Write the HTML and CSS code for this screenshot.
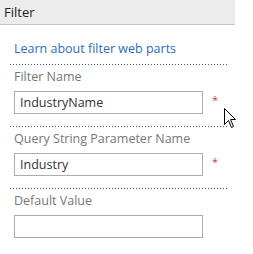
FILE: index.html
```html
<!DOCTYPE html>
<html>
<head>
<meta charset="utf-8">
<link rel="stylesheet" href="styles.css">
</head>
<body>
<div class="header">Filter</div>
<div class="content">
  <div class="link-row"><a class="link" href="#">Learn about filter web parts</a></div>
  <div class="section">
    <div class="label">Filter Name</div>
    <div class="field-row">
      <div class="input">IndustryName</div>
      <span class="req">*</span>
    </div>
  </div>
  <div class="section">
    <div class="label">Query String Parameter Name</div>
    <div class="field-row">
      <div class="input">Industry</div>
      <span class="req">*</span>
    </div>
  </div>
  <div class="section">
    <div class="label">Default Value</div>
    <div class="field-row">
      <div class="input"></div>
    </div>
  </div>
</div>
<svg class="cursor" width="13" height="21" viewBox="0 0 13 21">
  <path d="M0.5 0.5 L0.5 16.5 L4.5 12.5 L7.5 19.5 L9.5 18.5 L6.5 11.5 L11.5 11.5 Z" fill="#fff" stroke="#000" stroke-width="1"/>
</svg>
</body>
</html>
```
FILE: styles.css
```css
html, body {
  margin: 0;
  padding: 0;
  background: #fff;
}
body {
  position: relative;
  width: 253px;
  height: 254px;
  overflow: hidden;
  font-family: "Open Sans", "Noto Sans", sans-serif;
  font-size: 12.5px;
}
.header {
  width: 231px;
  height: 24px;
  line-height: 24px;
  padding-left: 4px;
  background: #ececec;
  border-bottom: 1px solid #c6c6c6;
  color: #222;
  font-size: 13px;
}
.content {
  width: 218px;
  margin-left: 10px;
}
.link-row {
  padding: 15px 0 6px 4px;
  line-height: 18px;
}
.link {
  color: #2a6ebb;
  text-decoration: none;
}
.section {
  padding: 4px 0 12px 4px;
  background-image: linear-gradient(to right, #3a52c0 1px, transparent 1px);
  background-size: 3px 1px;
  background-repeat: repeat-x;
  background-position: 0 0;
}
.label {
  color: #777;
  line-height: 18px;
  height: 18px;
  margin-top: 0;
  padding-bottom: 1px;
}
.field-row {
  display: flex;
  align-items: flex-start;
  margin-top: 4px;
}
.input {
  box-sizing: border-box;
  width: 189px;
  height: 23px;
  border: 1px solid #ababab;
  padding-left: 5px;
  line-height: 21px;
  color: #333;
  font-size: 12.5px;
}
.req {
  color: #d04040;
  font-size: 11px;
  margin-left: 9px;
  margin-top: 3px;
  line-height: 11px;
}
.cursor {
  position: absolute;
  left: 224px;
  top: 108px;
}
```
